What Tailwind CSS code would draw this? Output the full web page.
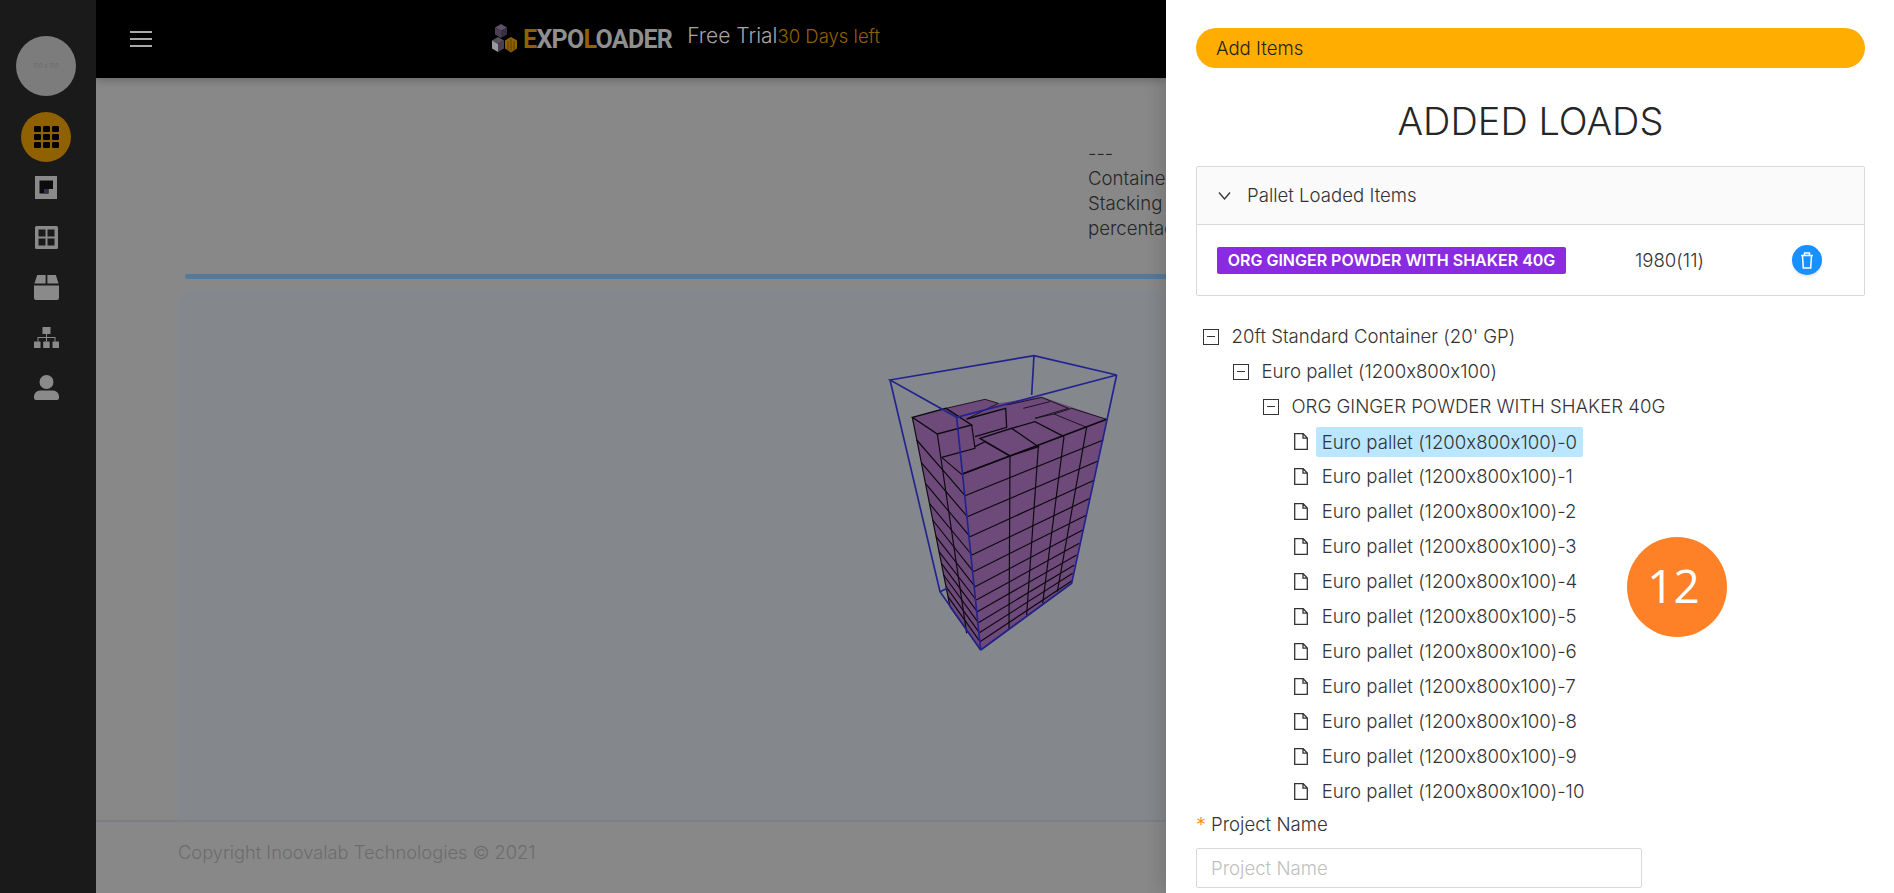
<!DOCTYPE html>
<html lang="en">
<head>
<meta charset="utf-8">
<title>Expoloader</title>
<script src="https://cdn.jsdelivr.net/npm/@tailwindcss/browser@4"></script>
</head>
<body class="font-['Inter',sans-serif] font-light text-[18.6px] leading-[25px] bg-[#888888] [font-feature-settings:'calt'_0]">
<div class="flex w-[1894px] h-[893px] overflow-hidden">
  <!-- Sidebar -->
  <aside class="w-[96px] shrink-0 bg-[#1a1a1a] flex flex-col items-center pt-[36px] pr-[4px]">
    <div class="w-[60px] h-[60px] rounded-full bg-[#7c7c7c] flex items-center justify-center text-[6px] leading-none text-[#666666]">150 x 150</div>
    <div class="mt-[16px] w-[50px] h-[50px] rounded-full bg-[#8f6100] flex items-center justify-center">
      <svg width="25" height="22" viewBox="0 0 25 22" fill="#000"><rect x="0" y="0" width="7" height="6" rx="1.2"/><rect x="9" y="0" width="7" height="6" rx="1.2"/><rect x="18" y="0" width="7" height="6" rx="1.2"/><rect x="0" y="8" width="7" height="6" rx="1.2"/><rect x="9" y="8" width="7" height="6" rx="1.2"/><rect x="18" y="8" width="7" height="6" rx="1.2"/><rect x="0" y="16" width="7" height="6" rx="1.2"/><rect x="9" y="16" width="7" height="6" rx="1.2"/><rect x="18" y="16" width="7" height="6" rx="1.2"/></svg>
    </div>
    <div class="h-[50px] flex items-center justify-center">
      <svg width="22" height="23" viewBox="0 0 22 23"><rect width="22" height="23" fill="#8a8a8a"/><path d="M4.500 4.500H18V13H13.500V17.500H4.500Z" fill="#0c0c0c"/><rect x="9" y="13" width="4.500" height="4.500" fill="#3b2a4a"/></svg>
    </div>
    <div class="h-[50px] flex items-center justify-center">
      <svg width="23" height="23" viewBox="0 0 23 23"><rect width="23" height="23" rx="1.5" fill="#8a8a8a"/><rect x="3.500" y="3.500" width="7" height="7" fill="#1a1a1a"/><rect x="12.500" y="3.500" width="7" height="7" fill="#1a1a1a"/><rect x="3.500" y="12.500" width="7" height="7" fill="#1a1a1a"/><rect x="12.500" y="12.500" width="7" height="7" fill="#1a1a1a"/></svg>
    </div>
    <div class="h-[50px] flex items-center justify-center">
      <svg width="25" height="25" viewBox="0 0 25 25" fill="#8a8a8a"><path d="M3.200 0H11.600V8.500H0.400z"/><path d="M13.400 0H21.800L24.600 8.500H13.400z"/><path d="M0 10.500H25V23a2 2 0 0 1-2 2H2a2 2 0 0 1-2-2z"/></svg>
    </div>
    <div class="h-[50px] flex items-center justify-center">
      <svg width="25" height="21" viewBox="0 0 25 21" fill="#8a8a8a"><rect x="8.500" y="0" width="8" height="7"/><rect x="0" y="14.500" width="6.500" height="6.500" rx="0.500"/><rect x="9.200" y="14.500" width="6.500" height="6.500" rx="0.500"/><rect x="18.500" y="14.500" width="6.500" height="6.500" rx="0.500"/><path d="M12 7h1v3h8.500v4.500h-1V11h-7.500v3.500h-1V11H4.500v3.500h-1V10H12z"/></svg>
    </div>
    <div class="h-[50px] flex items-center justify-center">
      <svg width="25" height="25" viewBox="0 0 25 25" fill="#8a8a8a"><circle cx="12.500" cy="7" r="7"/><path d="M6 15.500h13a6 6 0 0 1 6 6V23a2 2 0 0 1-2 2H2a2 2 0 0 1-2-2v-1.500a6 6 0 0 1 6-6z"/></svg>
    </div>
  </aside>

  <!-- Main -->
  <main class="w-[1070px] shrink-0 flex flex-col overflow-hidden bg-[#888888]">
    <header class="h-[78px] shrink-0 bg-black flex items-center shadow-[0_2px_8px_rgba(0,0,0,0.25)] z-10">
      <button class="ml-[34px] w-[22px] flex flex-col gap-[4.500px]" aria-label="menu">
        <span class="block h-[2.500px] bg-[#aaaaaa]"></span>
        <span class="block h-[2.500px] bg-[#aaaaaa]"></span>
        <span class="block h-[2.500px] bg-[#aaaaaa]"></span>
      </button>
      <svg class="ml-[339px]" width="27" height="30" viewBox="0 0 27 30">
        <path d="M10 0l6 3.500-6 3.500-6-3.500z" fill="#5d5266"/>
        <path d="M4 3.500l6 3.500v7l-6-3.500z" fill="#4a3f55"/>
        <path d="M16 3.500v7l-6 3.500V7z" fill="#3a3044"/>
        <path d="M7 13l6 3.500-6 3.500-6-3.500z" fill="#55505c"/>
        <path d="M1 16.500l6 3.500v8l-6-3.500z" fill="#9a9a9a"/>
        <path d="M13 16.500V24.500L7 28V20z" fill="#4a3f55"/>
        <path d="M20 13l6 3.500v8l-6 4-6-4v-8z" fill="#8f6100"/>
        <path d="M20 15v12M17 17v9M23 17v9" stroke="#4d3500" stroke-width="0.800"/>
      </svg>
      <div class="ml-[5px] font-['Roboto',sans-serif] font-bold text-[25px] leading-none tracking-[-0.700px] text-[#8f8f8f]"><span class="text-[#8f6100]">E</span>XPO<span class="text-[#8f6100]">L</span>OADER</div>
      <div class="ml-[15px] text-[21px] leading-none text-[#a6a6a6] -mt-[7px] whitespace-nowrap">Free Trial<span class="text-[#8f6100] text-[18.5px]">30 Days left</span></div>
    </header>
    <div class="flex-1 flex flex-col min-h-0 pl-[82px]">
      <div class="h-[75px] shrink-0 text-[#262626] whitespace-nowrap relative">
        <div class="absolute left-[910px] top-[63px] leading-[25px]">
          <div>---</div>
          <div>Container</div>
          <div>Stacking</div>
          <div>percentage</div>
        </div>
      </div>
      <div class="h-[121px] shrink-0"></div>
      <div class="h-[5px] shrink-0 ml-[7px] rounded-l-full bg-[#54799a]"></div>
      <div class="relative h-[530px] mt-[11px] shrink-0 bg-[#84878b]">
        <svg class="absolute left-[682px] top-[50px]" width="300" height="320" viewBox="0 0 900 960">
          <polygon points="157,232 258,205 375,178 415,190 545,170 740,238 635,730 362,930 270,800" fill="#6e4a7a"/>
          <g fill="none" stroke="#0d0a10" stroke-width="3.500">
            <path d="M305,403 L740,238" stroke-width="5"/>
            <path d="M315,467 L730,300"/>
            <path d="M322,530 L716,362"/>
            <path d="M330,590 L704,420"/>
            <path d="M336,645 L690,475"/>
            <path d="M340,695 L680,525"/>
            <path d="M345,740 L668,570"/>
            <path d="M349,780 L658,610"/>
            <path d="M352,815 L650,645"/>
            <path d="M355,848 L643,675"/>
            <path d="M358,878 L638,700"/>
            <path d="M360,905 L636,722"/>
            <path d="M362,930 L635,730"/>
            <path d="M450,350 L447,870"/>
            <path d="M535,320 L500,825"/>
            <path d="M612,290 L548,790"/>
            <path d="M680,262 L592,755"/>
            <path d="M305,403 L245,352"/>
            <path d="M315,467 L170,300"/>
            <path d="M322,530 L184,368"/>
            <path d="M330,590 L196,430"/>
            <path d="M336,645 L208,490"/>
            <path d="M340,695 L218,540"/>
            <path d="M345,740 L228,590"/>
            <path d="M349,780 L237,635"/>
            <path d="M352,815 L244,670"/>
            <path d="M355,848 L251,705"/>
            <path d="M358,878 L258,740"/>
            <path d="M360,905 L264,770"/>
            <path d="M362,930 L270,800"/>
            <path d="M157,232 L270,800"/>
            <path d="M232,282 L320,880"/>
            <path d="M157,232 L258,205 L335,255 L232,282 Z" stroke-width="4"/>
            <path d="M258,205 L375,178 L415,190 L320,237" stroke-width="2.500"/>
            <path d="M335,255 L345,325 L245,352"/>
            <path d="M320,237 L437,205 L440,262 L345,290" stroke-width="4"/>
            <path d="M360,295 L455,265 L535,320 L450,348 Z" stroke-width="4"/>
            <path d="M345,320 L375,305 L450,348 L305,403" stroke-width="4"/>
            <path d="M455,265 L525,245 L612,290" stroke-width="4"/>
            <path d="M525,235 L582,222 L680,262" stroke-width="2.500"/>
            <path d="M582,222 L635,205 L740,238" stroke-width="2.500"/>
            <path d="M440,195 L545,172 L625,205 L525,235" stroke-width="2.500"/>
            <path d="M490,205 L570,185" stroke-width="2.500"/>
          </g>
          <g fill="none" stroke="#23238f" stroke-width="5">
            <path d="M90,120 L522,47 L770,105 L290,232 Z"/>
            <path d="M90,120 L240,755 L362,930"/>
            <path d="M290,232 L362,930"/>
            <path d="M770,105 L635,730 L362,930"/>
            <path d="M522,47 L515,165"/>
            <path d="M240,755 L262,745"/>
          </g>
        </svg>
      </div>
      <div class="-ml-[82px] h-[73px] shrink-0 border-t-2 border-[#7d7d85] pl-[82px] flex items-center text-[#6c6c6c] text-[18.3px] pb-[10px]">Copyright Inoovalab Technologies © 2021</div>
    </div>
  </main>

  <!-- Drawer -->
  <section class="w-[728px] shrink-0 bg-white pl-[30px] pr-[29px] pt-[28px] text-[#333333] shadow-[-6px_0_16px_rgba(0,0,0,0.12)] z-20 overflow-hidden relative">
    <div class="h-[40px] rounded-full bg-[#ffae00] flex items-center pl-[20px] text-[#1f1f1f]">Add Items</div>
    <h2 class="mt-[29px] h-[48px] text-[38px] leading-[48px] text-center text-[#262626]">ADDED LOADS</h2>
    <div class="mt-[21px] h-[130px] border border-[#d9d9d9] rounded-[2px]">
      <div class="h-[58px] bg-[#fafafa] border-b border-[#d9d9d9] flex items-center pl-[21px]">
        <svg width="13" height="13" viewBox="0 0 13 13" fill="none" stroke="#333" stroke-width="1.300"><path d="M1 3.500l5.500 6.500L12 3.500"/></svg>
        <span class="ml-[16px]">Pallet Loaded Items</span>
      </div>
      <div class="h-[70px] flex items-center pl-[20px]">
        <span class="w-[349px] h-[27px] rounded-[2px] bg-[#8a2be2] text-white font-semibold text-[16px] leading-[27px] text-center whitespace-nowrap">ORG GINGER POWDER WITH SHAKER 40G</span>
        <span class="w-[69px] shrink-0"></span>
        <span class="w-[157px] shrink-0">1980(11)</span>
        <span class="w-[30px] h-[30px] rounded-full bg-[#1890ff] flex items-center justify-center shadow-[0_2px_2px_rgba(0,0,0,0.1)]">
          <svg width="14" height="17" viewBox="0 0 14 17" fill="none" stroke="#fff" stroke-width="1.500"><path d="M1 3.500h12M2.500 3.500l.8 12.500h7.400l.8-12.500M4.500 3V1h5v2"/></svg>
        </span>
      </div>
    </div>
    <div class="mt-[23px] pl-[7px] text-[#333333]">
      <div class="h-[35px] flex items-center">
        <span class="w-[16px] h-[16px] border-[1.500px] border-[#333333] flex items-center justify-center"><span class="block w-[8px] h-[1.500px] bg-[#333333]"></span></span>
        <span class="ml-[12.500px]">20ft Standard Container (20' GP)</span>
      </div>
      <div class="h-[35px] flex items-center pl-[30px]">
        <span class="w-[16px] h-[16px] border-[1.500px] border-[#333333] flex items-center justify-center"><span class="block w-[8px] h-[1.500px] bg-[#333333]"></span></span>
        <span class="ml-[12.500px]">Euro pallet (1200x800x100)</span>
      </div>
      <div class="h-[35px] flex items-center pl-[60px]">
        <span class="w-[16px] h-[16px] border-[1.500px] border-[#333333] flex items-center justify-center"><span class="block w-[8px] h-[1.500px] bg-[#333333]"></span></span>
        <span class="ml-[12.500px]">ORG GINGER POWDER WITH SHAKER 40G</span>
      </div>
      <div class="pl-[91px]">
        <div class="h-[35px] flex items-center">
          <svg width="14" height="17" viewBox="0 0 14 17" fill="none" stroke="#333" stroke-width="1.300"><path d="M.7.7h8.500l4.100 4.300v11.300H.7zM9 .7v4.500h4.300"/></svg>
          <span class="ml-[8px] h-[30px] leading-[30px] px-[5.700px] rounded-[2px] bg-[#bae7ff]">Euro pallet (1200x800x100)-0</span>
        </div>
        <div class="h-[35px] flex items-center">
          <svg width="14" height="17" viewBox="0 0 14 17" fill="none" stroke="#333" stroke-width="1.300"><path d="M.7.7h8.500l4.100 4.300v11.300H.7zM9 .7v4.500h4.300"/></svg>
          <span class="ml-[13.700px]">Euro pallet (1200x800x100)-1</span>
        </div>
        <div class="h-[35px] flex items-center">
          <svg width="14" height="17" viewBox="0 0 14 17" fill="none" stroke="#333" stroke-width="1.300"><path d="M.7.7h8.500l4.100 4.300v11.300H.7zM9 .7v4.500h4.300"/></svg>
          <span class="ml-[13.700px]">Euro pallet (1200x800x100)-2</span>
        </div>
        <div class="h-[35px] flex items-center">
          <svg width="14" height="17" viewBox="0 0 14 17" fill="none" stroke="#333" stroke-width="1.300"><path d="M.7.7h8.500l4.100 4.300v11.300H.7zM9 .7v4.500h4.300"/></svg>
          <span class="ml-[13.700px]">Euro pallet (1200x800x100)-3</span>
        </div>
        <div class="h-[35px] flex items-center">
          <svg width="14" height="17" viewBox="0 0 14 17" fill="none" stroke="#333" stroke-width="1.300"><path d="M.7.7h8.500l4.100 4.300v11.300H.7zM9 .7v4.500h4.300"/></svg>
          <span class="ml-[13.700px]">Euro pallet (1200x800x100)-4</span>
        </div>
        <div class="h-[35px] flex items-center">
          <svg width="14" height="17" viewBox="0 0 14 17" fill="none" stroke="#333" stroke-width="1.300"><path d="M.7.7h8.500l4.100 4.300v11.300H.7zM9 .7v4.500h4.300"/></svg>
          <span class="ml-[13.700px]">Euro pallet (1200x800x100)-5</span>
        </div>
        <div class="h-[35px] flex items-center">
          <svg width="14" height="17" viewBox="0 0 14 17" fill="none" stroke="#333" stroke-width="1.300"><path d="M.7.7h8.500l4.100 4.300v11.300H.7zM9 .7v4.500h4.300"/></svg>
          <span class="ml-[13.700px]">Euro pallet (1200x800x100)-6</span>
        </div>
        <div class="h-[35px] flex items-center">
          <svg width="14" height="17" viewBox="0 0 14 17" fill="none" stroke="#333" stroke-width="1.300"><path d="M.7.7h8.500l4.100 4.300v11.300H.7zM9 .7v4.500h4.300"/></svg>
          <span class="ml-[13.700px]">Euro pallet (1200x800x100)-7</span>
        </div>
        <div class="h-[35px] flex items-center">
          <svg width="14" height="17" viewBox="0 0 14 17" fill="none" stroke="#333" stroke-width="1.300"><path d="M.7.7h8.500l4.100 4.300v11.300H.7zM9 .7v4.500h4.300"/></svg>
          <span class="ml-[13.700px]">Euro pallet (1200x800x100)-8</span>
        </div>
        <div class="h-[35px] flex items-center">
          <svg width="14" height="17" viewBox="0 0 14 17" fill="none" stroke="#333" stroke-width="1.300"><path d="M.7.7h8.500l4.100 4.300v11.300H.7zM9 .7v4.500h4.300"/></svg>
          <span class="ml-[13.700px]">Euro pallet (1200x800x100)-9</span>
        </div>
        <div class="h-[35px] flex items-center">
          <svg width="14" height="17" viewBox="0 0 14 17" fill="none" stroke="#333" stroke-width="1.300"><path d="M.7.7h8.500l4.100 4.300v11.300H.7zM9 .7v4.500h4.300"/></svg>
          <span class="ml-[13.700px]">Euro pallet (1200x800x100)-10</span>
        </div>
      </div>
    </div>
    <div class="mt-[3px] h-[25px] flex items-center"><span class="w-[15px] text-[#fa8c16] text-[20px] leading-none">*</span><span>Project Name</span></div>
    <input class="mt-[11px] block w-[446px] h-[40px] border border-[#d9d9d9] rounded-[2px] px-[14px] placeholder:text-[#bfbfbf] outline-none" placeholder="Project Name">
    <div class="absolute left-[461px] top-[537px] w-[100px] h-[100px] rounded-full bg-[#ff8127] flex items-center justify-center text-white text-[46px] font-['Open_Sans',sans-serif] font-normal leading-none pb-[4px] pr-[7px]">12</div>
  </section>
</div>
</body>
</html>
